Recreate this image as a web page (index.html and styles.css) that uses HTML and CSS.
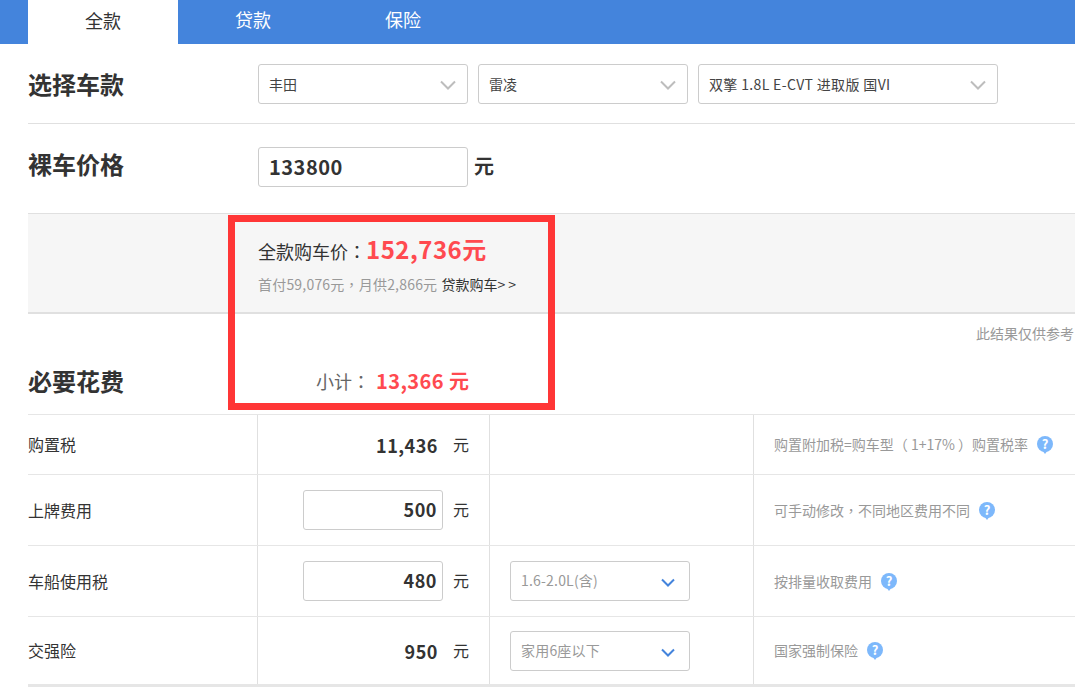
FILE: index.html
```html
<!DOCTYPE html>
<html lang="zh-CN">
<head>
    <meta charset="UTF-8">
    <title>购车计算器</title>
    <link rel="stylesheet" href="styles.css">
</head>
<body>

    <div class="tabs">
        <a class="tab active">全款</a>
        <a class="tab">贷款</a>
        <a class="tab">保险</a>
    </div>

    <div class="container">
        <div class="row row-car">
            <h2>选择车款</h2>
            <div class="select w210">丰田
                <svg class="arrow" width="16" height="10" viewBox="0 0 16 10"><path d="M1 1.500l7 7 7-7" fill="none" stroke="#bdbdbd" stroke-width="2"/></svg>
            </div>
            <div class="select w210">雷凌
                <svg class="arrow" width="16" height="10" viewBox="0 0 16 10"><path d="M1 1.500l7 7 7-7" fill="none" stroke="#bdbdbd" stroke-width="2"/></svg>
            </div>
            <div class="select w300 wide-text">双擎 1.8L E-CVT 进取版 国VI
                <svg class="arrow" width="16" height="10" viewBox="0 0 16 10"><path d="M1 1.500l7 7 7-7" fill="none" stroke="#bdbdbd" stroke-width="2"/></svg>
            </div>
        </div>

        <div class="row row-price">
            <h2>裸车价格</h2>
            <input class="price-input" type="text" value="133800">
            <span class="price-unit">元</span>
        </div>

        <div class="summary">
            <div class="summary-total">全款购车价<span class="p" lang="zh-TW">：</span><strong>152,736元</strong></div>
            <div class="summary-sub"><span class="sub-text">首付59,076元<span class="p" lang="zh-TW">，</span>月供2,866元</span> <a>贷款购车<span class="gt">&gt;&gt;</span></a></div>
        </div>

        <div class="note">此结果仅供参考</div>

        <div class="section-head">
            <h2>必要花费</h2>
            <div class="subtotal">小计<span class="p" lang="zh-TW">：</span> <strong>13,366 元</strong></div>
        </div>

        <div class="fees">
            <div class="fee fee-1">
                <div class="fee-name">购置税</div>
                <div class="fee-value"><b>11,436</b><span>元</span></div>
                <div class="fee-option"></div>
                <div class="fee-note">购置附加税=购车型（ 1+17% ）购置税率<span class="help">?</span></div>
            </div>
            <div class="fee fee-2">
                <div class="fee-name">上牌费用</div>
                <div class="fee-value"><input type="text" value="500"><span>元</span></div>
                <div class="fee-option"></div>
                <div class="fee-note">可手动修改<span class="p" lang="zh-TW">，</span>不同地区费用不同<span class="help">?</span></div>
            </div>
            <div class="fee fee-2">
                <div class="fee-name">车船使用税</div>
                <div class="fee-value"><input type="text" value="480"><span>元</span></div>
                <div class="fee-option">
                    <div class="select small">1.6-2.0L(含)
                        <svg class="arrow" width="14" height="9" viewBox="0 0 14 9"><path d="M1 1.500l6 6 6-6" fill="none" stroke="#4484dc" stroke-width="2"/></svg>
                    </div>
                </div>
                <div class="fee-note">按排量收取费用<span class="help">?</span></div>
            </div>
            <div class="fee fee-3">
                <div class="fee-name">交强险</div>
                <div class="fee-value"><b>950</b><span>元</span></div>
                <div class="fee-option">
                    <div class="select small">家用6座以下
                        <svg class="arrow" width="14" height="9" viewBox="0 0 14 9"><path d="M1 1.500l6 6 6-6" fill="none" stroke="#4484dc" stroke-width="2"/></svg>
                    </div>
                </div>
                <div class="fee-note">国家强制保险<span class="help">?</span></div>
            </div>
        </div>

        <div class="red-box"></div>
    </div>

</body>
</html>
```
FILE: styles.css
```css
html, body {
    height: 695px;
    overflow: hidden;
}
body {
    font-family: "Noto Sans CJK SC", "Noto Sans", sans-serif;
    margin: 0;
    background-color: white;
    color: #333;
}
h2 {
    margin: 0;
    width: 230px;
    font-size: 24px;
    font-weight: bold;
    color: #333;
}
input {
    font-family: inherit;
    box-sizing: border-box;
    border: 1px solid #ccc;
    border-radius: 3px;
    color: #333;
    font-weight: bold;
    letter-spacing: .5px;
}
/* centered full-width punctuation */
.p {
    font-family: "Noto Sans CJK TC", sans-serif;
}

/* tabs */
.tabs {
    display: flex;
    height: 44px;
    padding-left: 28px;
    background-color: #4484dc;
}
.tab {
    width: 150px;
    line-height: 38px;
    text-align: center;
    font-size: 18px;
    color: white;
}
.tab.active {
    line-height: 40px;
    background-color: white;
    color: #333;
}

.container {
    position: relative;
    margin-left: 28px;
}
.row {
    display: flex;
    align-items: center;
}
.row-car {
    height: 79px;
    gap: 10px;
    border-bottom: 1px solid #e0e0e0;
}
.row-car h2 {
    margin-right: -10px;
}
.row-price {
    box-sizing: border-box;
    height: 89px;
    padding-bottom: 3px;
}
.row-price h2 {
    margin-bottom: 8px;
}

/* selects */
.select {
    position: relative;
    box-sizing: border-box;
    height: 40px;
    line-height: 38px;
    padding-left: 10px;
    border: 1px solid #ccc;
    border-radius: 3px;
    font-size: 14px;
    color: #444;
}
.w210 {
    width: 210px;
}
.w300 {
    width: 300px;
}
.wide-text {
    letter-spacing: .35px;
}
.arrow {
    position: absolute;
    right: 11px;
    top: 15px;
}
.select.small {
    width: 180px;
    line-height: 36px;
    color: #999;
    letter-spacing: .2px;
}
.select.small .arrow {
    right: 14px;
    top: 16px;
}

.price-input {
    width: 210px;
    height: 40px;
    padding: 0 10px 2px;
    font-size: 20px;
}
.price-unit {
    margin-left: 6px;
    margin-bottom: 4px;
    font-size: 20px;
    font-weight: bold;
}

/* summary */
.summary {
    box-sizing: border-box;
    height: 101px;
    padding: 17px 0 0 230px;
    background-color: #f6f6f6;
    border-top: 1px solid #e0e0e0;
    border-bottom: 2px solid #e0e0e0;
}
.summary-total {
    font-size: 18px;
    line-height: 36px;
}
.summary-total strong {
    font-size: 24px;
    letter-spacing: .5px;
    color: #ff4a50;
}
.summary-sub {
    margin-top: 3px;
    font-size: 14px;
    line-height: 24px;
    color: #999;
}
.sub-text {
    letter-spacing: .2px;
}
.summary-sub a {
    margin-left: 1px;
    color: #333;
}
.gt {
    letter-spacing: 3px;
}

.note {
    margin-top: 9px;
    font-size: 14px;
    line-height: 20px;
    text-align: right;
    padding-right: 1px;
    color: #999;
}

.section-head {
    display: flex;
    align-items: center;
    box-sizing: border-box;
    height: 71px;
    padding-top: 3px;
}
.subtotal {
    margin-left: 58px;
    font-size: 18px;
    color: #666;
}
.subtotal strong {
    margin-left: 2px;
    font-size: 20px;
    letter-spacing: .4px;
    color: #ff4a50;
}

/* fee table */
.fees {
    border-top: 1px solid #e6e6e6;
    border-bottom: 3px solid #e6e6e6;
}
.fee {
    display: flex;
    border-bottom: 1px solid #e6e6e6;
    font-size: 16px;
}
.fee:last-child {
    border-bottom: none;
}
.fee-1 {
    height: 59px;
}
.fee-2 {
    height: 70px;
}
.fee-3 {
    height: 67px;
}
.fee > div {
    display: flex;
    align-items: center;
}
.fee-name {
    width: 229px;
    padding-bottom: 1px;
}
.fee-value {
    box-sizing: border-box;
    width: 232px;
    justify-content: flex-end;
    padding-right: 20px;
    border-left: 1px solid #e0e0e0;
}
.fee-value b {
    font-size: 18px;
    letter-spacing: .5px;
}
.fee-value span {
    margin-left: 15px;
    margin-bottom: 2px;
}
.fee-value input {
    width: 140px;
    height: 40px;
    padding: 0 5px 2px 0;
    text-align: right;
    font-size: 18px;
    margin-right: -5px;
}
.fee-option {
    box-sizing: border-box;
    width: 264px;
    padding-left: 20px;
    border-left: 1px solid #e0e0e0;
}
.fee-note {
    flex: 1;
    padding-left: 20px;
    padding-bottom: 1px;
    border-left: 1px solid #e0e0e0;
    font-size: 14px;
    color: #999;
}
.help {
    position: relative;
    width: 16px;
    height: 16px;
    margin-left: 9px;
    border-radius: 50%;
    background-color: #7db8fb;
    color: white;
    font-size: 13px;
    font-weight: bold;
    line-height: 16px;
    text-align: center;
}
.help::after {
    content: "";
    position: absolute;
    left: 5px;
    bottom: -2px;
    border-top: 4px solid #7db8fb;
    border-left: 3px solid transparent;
    border-right: 3px solid transparent;
}

/* annotation over the screenshot */
.red-box {
    position: absolute;
    left: 200px;
    top: 171px;
    box-sizing: border-box;
    width: 327px;
    height: 195px;
    border: 7px solid #ff3636;
}
```
